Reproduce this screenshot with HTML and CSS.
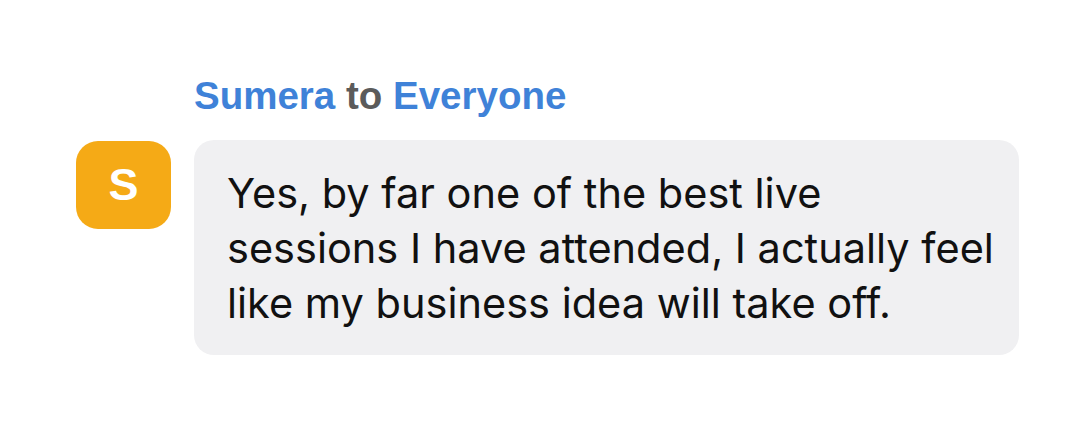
FILE: index.html
```html
<!DOCTYPE html>
<html>
<head>
<meta charset="utf-8">
<link rel="stylesheet" href="styles.css">
</head>
<body>
<div class="chat">
  <div class="sender"><span class="name">Sumera</span> <span class="to">to</span> <span class="name">Everyone</span></div>
  <div class="row">
    <div class="avatar">S</div>
    <div class="bubble">Yes, by far one of the best live sessions I have attended, I actually feel like my business idea will take off.</div>
  </div>
</div>
</body>
</html>
```
FILE: styles.css
```css
html, body {
  margin: 0;
  padding: 0;
  background: #ffffff;
}
body {
  width: 1080px;
  height: 430px;
  overflow: hidden;
  font-family: "Liberation Sans", Arial, sans-serif;
}
.chat {
  padding: 76px 0 0 76px;
}
.sender {
  margin-left: 118px;
  font-weight: bold;
  font-size: 38.5px;
  line-height: 40px;
  color: #3f82d8;
}
.sender .to {
  color: #5b5b5b;
}
.row {
  display: flex;
  align-items: flex-start;
  gap: 23px;
  margin-top: 24px;
}
.avatar {
  width: 95px;
  height: 88px;
  border-radius: 22px;
  background: #f5aa16;
  color: #ffffff;
  font-weight: bold;
  font-size: 45px;
  display: flex;
  align-items: center;
  justify-content: center;
  margin-top: 1px;
}
.bubble {
  width: 825px;
  box-sizing: border-box;
  padding: 26px 20px 24px 33px;
  background: #f0f0f2;
  border-radius: 20px;
  font-family: Inter, "Liberation Sans", sans-serif;
  font-size: 41.5px;
  line-height: 55px;
  color: #111111;
}
```
